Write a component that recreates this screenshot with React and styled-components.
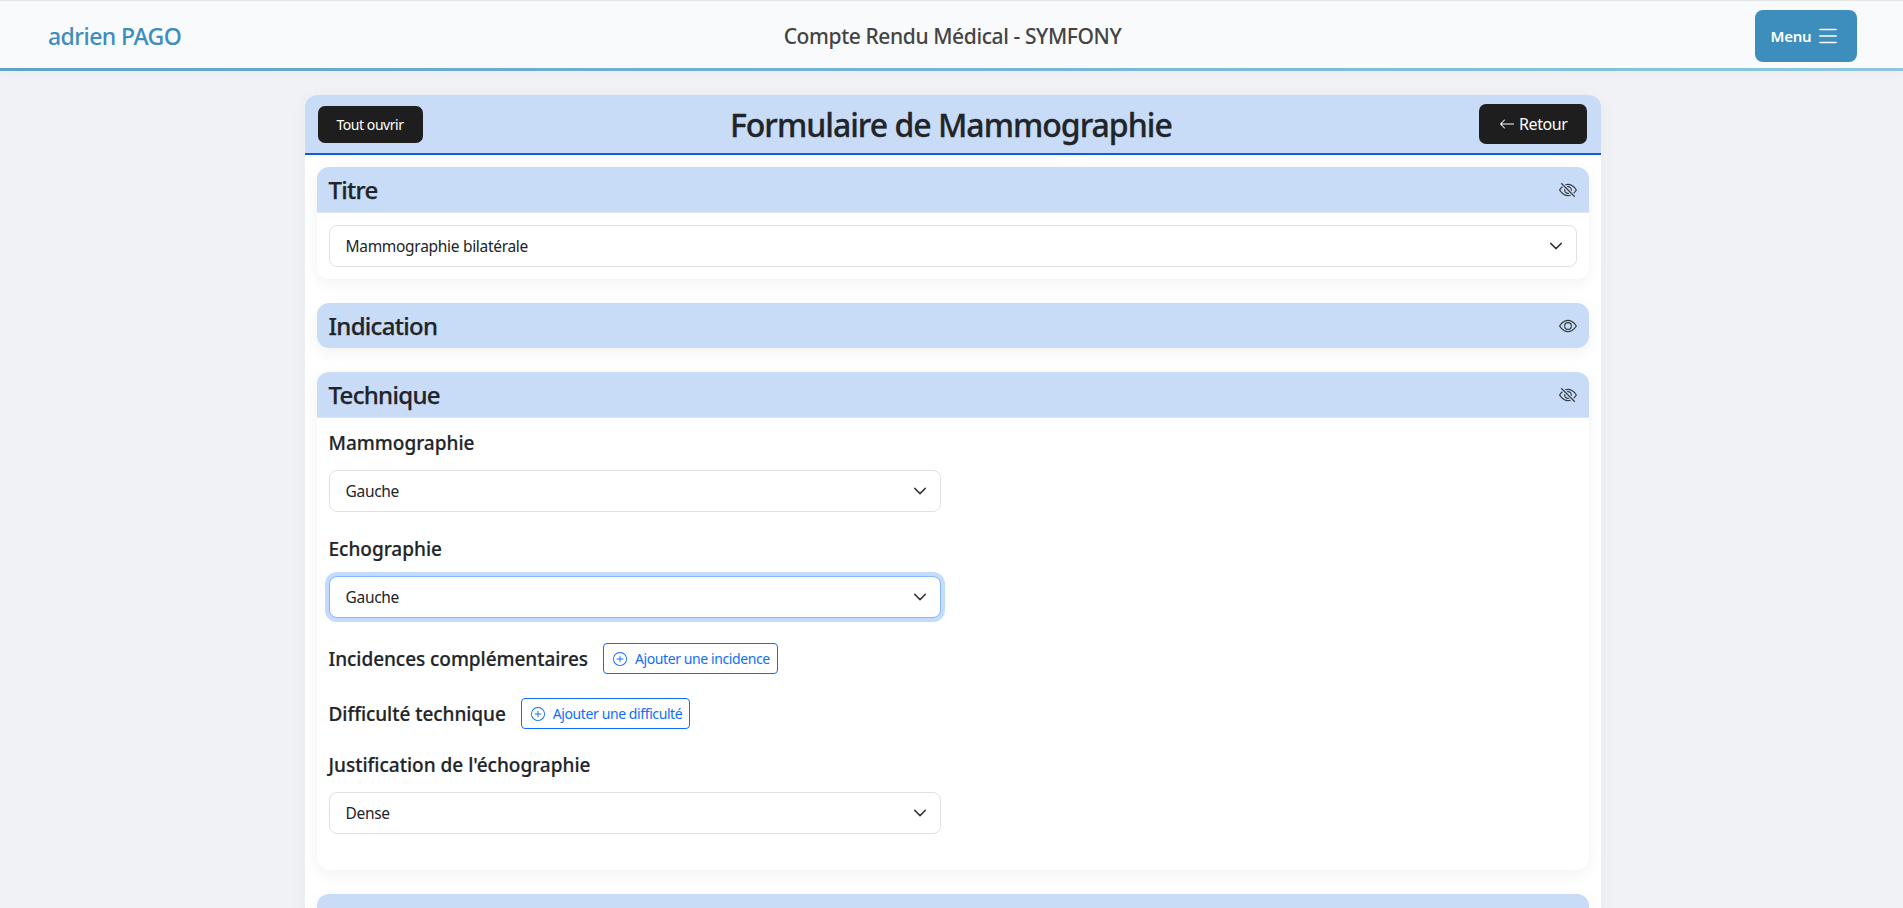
import React from 'react'
import styled, { createGlobalStyle } from 'styled-components'
import { BsArrowLeft, BsEye, BsEyeSlash, BsList, BsPlusCircle } from 'react-icons/bs'

const chevron =
    "url(\"data:image/svg+xml,%3csvg xmlns='http://www.w3.org/2000/svg' viewBox='0 0 16 16'%3e%3cpath fill='none' stroke='%23343a40' stroke-linecap='round' stroke-linejoin='round' stroke-width='1.7' d='m2 5 6 6 6-6'/%3e%3c/svg%3e\")"

const GlobalStyle = createGlobalStyle`
    html, body {
        margin: 0;
        height: 100%;
        overflow: hidden;
        background: #f0f2f6;
        color: #212529;
        font-family: "Noto Sans", "Open Sans", sans-serif;
    }
`

const Navbar = styled.header`
    display: grid;
    grid-template-columns: 1fr auto 1fr;
    align-items: center;
    height: 65px;
    padding: 2px 46px 0 48px;
    background: #f8fafc;
    border-top: 1px solid #e2e5e3;
    box-shadow: 0 3px 10px rgba(0, 0, 0, 0.05);
    position: relative;
    &::after {
        content: '';
        position: absolute;
        left: 0;
        right: 0;
        bottom: -3px;
        height: 3px;
        background: linear-gradient(90deg, #5fa3c9, #8ec6df);
    }
`

const Brand = styled.div`
    font-size: 23px;
    font-weight: 500;
    letter-spacing: -0.55px;
    color: #3d8dbd;
`

const NavTitle = styled.div`
    font-size: 21px;
    font-weight: 500;
    letter-spacing: -0.4px;
    color: #444;
`

const MenuButton = styled.button`
    justify-self: end;
    display: flex;
    align-items: center;
    justify-content: center;
    gap: 4px;
    width: 102px;
    height: 52px;
    border: 0;
    border-radius: 8px;
    background: #3d8dbd;
    color: #fff;
    font: 600 15px "Noto Sans", sans-serif;
    letter-spacing: -0.25px;
`

const Page = styled.div`
    padding-left: 2px;
`

const Card = styled.main`
    width: 1296px;
    margin: 27px auto 0;
    background: #fff;
    border-radius: 12px 12px 0 0;
    box-shadow: 0 4px 20px rgba(0, 0, 0, 0.04);
`

const CardHead = styled.div`
    display: flex;
    align-items: center;
    justify-content: space-between;
    height: 58px;
    padding: 0 13px;
    background: #c9dcf7;
    border-bottom: 2px solid #0d5ed8;
    border-radius: 12px 12px 0 0;
`

const Title = styled.h1`
    margin: 0;
    font-size: 32px;
    font-weight: 500;
    letter-spacing: -1px;
    -webkit-text-stroke: 0.3px currentColor;
`

const DarkButton = styled.button`
    display: flex;
    align-items: center;
    gap: 4px;
    height: ${p => (p.$small ? 37 : 40)}px;
    padding: ${p => (p.$small ? '0 19px' : '0 20px')};
    border: 0;
    border-radius: 7px;
    background: #1e1e1e;
    color: #fff;
    font: 400 ${p => (p.$small ? 14 : 16)}px "Noto Sans", sans-serif;
    letter-spacing: ${p => (p.$small ? -0.45 : -0.42)}px;
`

const CardBody = styled.div`
    padding: 12px 12px 0;
`

const Section = styled.section`
    margin-bottom: 24px;
    background: #fff;
    border-radius: 12px;
    box-shadow: 0 4px 16px rgba(0, 0, 0, 0.06);
`

const SectionHead = styled.div`
    display: flex;
    align-items: center;
    justify-content: space-between;
    height: 45px;
    padding: 0 12px;
    background: #c9dcf7;
    border-bottom: ${p => (p.$open ? '1px solid #dfe6f1' : '0')};
    border-radius: ${p => (p.$open ? '12px 12px 0 0' : '12px')};
    color: #343a40;
    svg {
        width: 18px;
        height: 18px;
    }
`

const SectionTitle = styled.h2`
    margin: 0;
    font-size: 24px;
    font-weight: 500;
    letter-spacing: -0.7px;
    -webkit-text-stroke: 0.25px currentColor;
    color: #212529;
`

const SectionBody = styled.div`
    padding: ${p => p.$top || 12}px 12px ${p => p.$bottom || 12}px;
`

const Select = styled.select`
    display: block;
    width: ${p => p.$width || '100%'};
    height: 42px;
    padding: 0 36px 0 16px;
    appearance: none;
    background: #fff ${chevron} no-repeat right 13px center / 14px 14px;
    border: 1px solid ${p => (p.$focused ? '#86b7fe' : '#dee2e6')};
    border-radius: 8px;
    box-shadow: ${p => (p.$focused ? '0 0 0 4px rgba(13, 110, 253, 0.25)' : 'none')};
    color: #212529;
    font: 400 15.5px "Noto Sans", sans-serif;
    letter-spacing: -0.3px;
    outline: none;
`

const Label = styled.div`
    margin: ${p => p.$top || 0}px 0 12px;
    font-size: 19px;
    font-weight: 500;
    line-height: 29px;
    -webkit-text-stroke: 0.2px currentColor;
`

const InlineRow = styled.div`
    display: flex;
    align-items: center;
    gap: 15px;
    height: 31px;
    margin-top: ${p => p.$top}px;
`

const InlineLabel = styled.span`
    font-size: 19px;
    font-weight: 500;
    letter-spacing: -0.05px;
    -webkit-text-stroke: 0.2px currentColor;
`

const AddButton = styled.button`
    display: flex;
    align-items: center;
    gap: 8px;
    height: 31px;
    padding: 0 7px 0 9px;
    background: transparent;
    border: 1px solid #0d6efd;
    border-radius: 4px;
    color: #0d6efd;
    font: 400 14px "Noto Sans", sans-serif;
    letter-spacing: -0.4px;
`

const SelectBox = ({ value, ...props }) => (
    <Select defaultValue={value} {...props}>
        <option>{value}</option>
    </Select>
)

export default function App() {
    return (
        <>
            <GlobalStyle />
            <Navbar>
                <Brand>adrien PAGO</Brand>
                <NavTitle>Compte Rendu Médical - SYMFONY</NavTitle>
                <MenuButton>
                    Menu <BsList size={26} />
                </MenuButton>
            </Navbar>
            <Page>
                <Card>
                    <CardHead>
                        <DarkButton $small>Tout ouvrir</DarkButton>
                        <Title>Formulaire de Mammographie</Title>
                        <DarkButton>
                            <BsArrowLeft size={16} /> Retour
                        </DarkButton>
                    </CardHead>
                    <CardBody>
                        <Section>
                            <SectionHead $open>
                                <SectionTitle>Titre</SectionTitle>
                                <BsEyeSlash />
                            </SectionHead>
                            <SectionBody>
                                <SelectBox value="Mammographie bilatérale" />
                            </SectionBody>
                        </Section>
                        <Section>
                            <SectionHead>
                                <SectionTitle>Indication</SectionTitle>
                                <BsEye />
                            </SectionHead>
                        </Section>
                        <Section>
                            <SectionHead $open>
                                <SectionTitle>Technique</SectionTitle>
                                <BsEyeSlash />
                            </SectionHead>
                            <SectionBody $top={11} $bottom={36}>
                                <Label>Mammographie</Label>
                                <SelectBox value="Gauche" $width="612px" />
                                <Label $top={23}>Echographie</Label>
                                <SelectBox value="Gauche" $width="612px" $focused />
                                <InlineRow $top={25}>
                                    <InlineLabel>Incidences complémentaires</InlineLabel>
                                    <AddButton>
                                        <BsPlusCircle size={14} /> Ajouter une incidence
                                    </AddButton>
                                </InlineRow>
                                <InlineRow $top={24}>
                                    <InlineLabel>Difficulté technique</InlineLabel>
                                    <AddButton>
                                        <BsPlusCircle size={14} /> Ajouter une difficulté
                                    </AddButton>
                                </InlineRow>
                                <Label $top={22}>Justification de l'échographie</Label>
                                <SelectBox value="Dense" $width="612px" />
                            </SectionBody>
                        </Section>
                        <Section>
                            <SectionHead />
                        </Section>
                    </CardBody>
                </Card>
            </Page>
        </>
    )
}
